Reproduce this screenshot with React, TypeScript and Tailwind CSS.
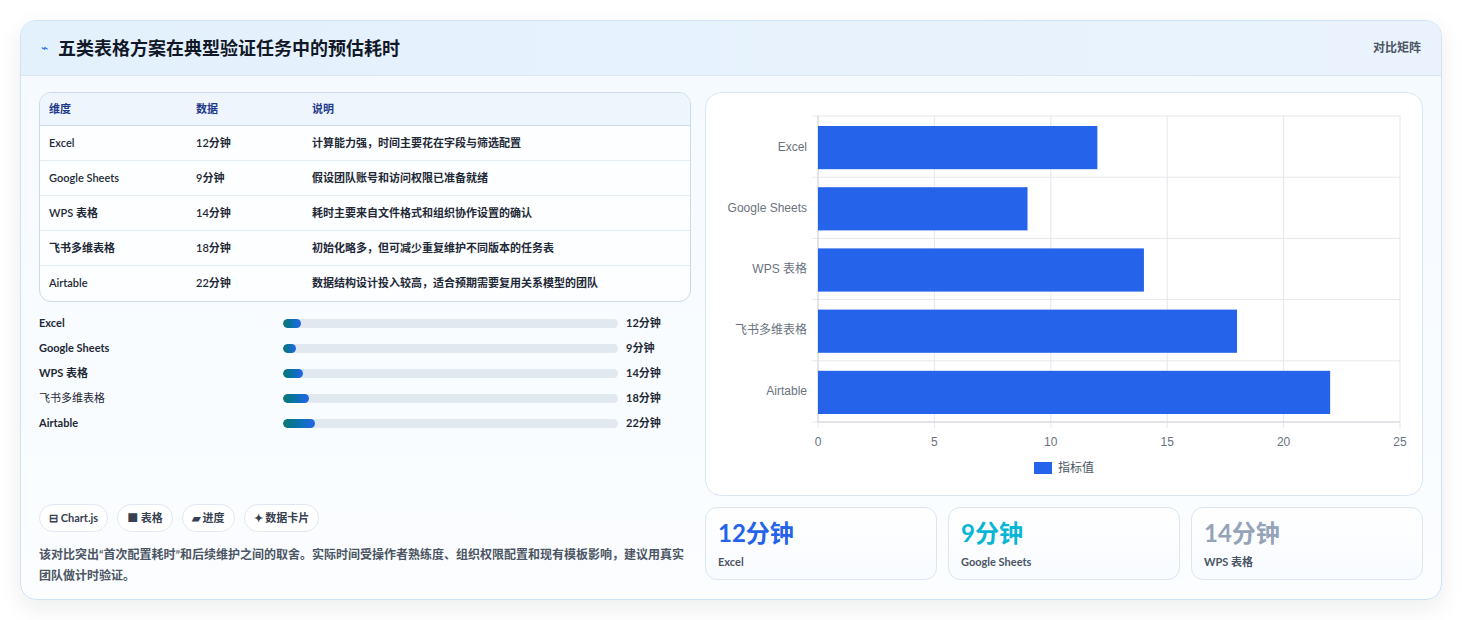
import React from "react";

const rows = [
  ["Excel", "12分钟", "计算能力强，时间主要花在字段与筛选配置", 12],
  ["Google Sheets", "9分钟", "假设团队账号和访问权限已准备就绪", 9],
  ["WPS 表格", "14分钟", "耗时主要来自文件格式和组织协作设置的确认", 14],
  ["飞书多维表格", "18分钟", "初始化略多，但可减少重复维护不同版本的任务表", 18],
  ["Airtable", "22分钟", "数据结构设计投入较高，适合预期需要复用关系模型的团队", 22],
] as const;

function Chart() {
  const x0 = 112, x1 = 694, y0 = 23, y1 = 329;
  const sx = (v: number) => x0 + ((x1 - x0) * v) / 25;
  const band = (y1 - y0) / 5;
  return (
    <svg width="716" height="402" className="block">
      {[0, 5, 10, 15, 20, 25].map((t) => (
        <g key={t}>
          <line x1={sx(t)} x2={sx(t)} y1={y0} y2={y1 + 6} stroke="#e5e7eb" />
          <text x={sx(t)} y={353} textAnchor="middle" fontSize="12" fill="#6b7280" fontFamily="Liberation Sans, sans-serif">{t}</text>
        </g>
      ))}
      {[0, 1, 2, 3, 4, 5].map((i) => (
        <line key={i} x1={x0 - 6} x2={x1} y1={y0 + band * i} y2={y0 + band * i} stroke="#e5e7eb" />
      ))}
      <line x1={x0} x2={x0} y1={y0} y2={y1} stroke="#d1d5db" />
      <line x1={x0} x2={x1} y1={y1} y2={y1} stroke="#d1d5db" />
      {rows.map((r, i) => (
        <g key={i}>
          <rect x={x0} y={y0 + band * i + 10} width={sx(r[3]) - x0} height={band - 18} fill="#2563eb" />
          <text x={x0 - 11} y={y0 + band * i + band / 2 + 4} textAnchor="end" fontSize="12" fill="#6b7280" fontFamily="Liberation Sans, Noto Sans CJK SC, sans-serif">{r[0]}</text>
        </g>
      ))}
      <rect x={328} y={369} width={18} height={12} fill="#2563eb" />
      <text x={352} y={379} fontSize="12" fill="#4b5563" fontFamily="Noto Sans CJK SC, sans-serif">指标值</text>
    </svg>
  );
}

export default function App() {
  return (
    <div className="w-[1462px] h-[620px] bg-white pt-5 px-5" style={{ fontFamily: "Lato, 'Noto Sans CJK SC', sans-serif" }}>
      <div className="w-[1422px] h-[580px] rounded-2xl border border-[#cfe3f5] bg-gradient-to-b from-[#f5faff] to-[#fbfdff] shadow-[0_8px_24px_rgba(15,23,42,0.08)] overflow-hidden flex flex-col">
        <div className="h-[55px] shrink-0 flex items-center justify-between px-5 bg-gradient-to-r from-[#e3f1fd] to-[#eaf3fd] border-b border-[#d6e6f5]">
          <div className="flex items-center gap-[10px]">
            <span className="text-[#2563eb] text-[12px]">⌁</span>
            <span className="text-[18px] font-bold text-[#111827]">五类表格方案在典型验证任务中的预估耗时</span>
          </div>
          <span className="text-[12px] text-[#4b5563] font-semibold">对比矩阵</span>
        </div>
        <div className="flex gap-[14px] px-[18px] pt-4 flex-1">
          <div className="w-[652px] flex flex-col">
            <div className="rounded-xl border border-[#cbd9e8] overflow-hidden bg-white/70 text-[11px] text-[#1f2937]">
              <div className="flex h-[33px] items-center bg-[#eef5fd] border-b border-[#cbd9e8] text-[#1e3a8a] font-semibold">
                <div className="w-[156px] pl-[9px]">维度</div>
                <div className="w-[116px]">数据</div>
                <div>说明</div>
              </div>
              {rows.map((r, i) => (
                <div key={i} className={`flex h-[35px] items-center font-semibold ${i < 4 ? "border-b border-[#e3ebf3]" : ""}`}>
                  <div className="w-[156px] pl-[9px]">{r[0]}</div>
                  <div className="w-[116px]">{r[1]}</div>
                  <div>{r[2]}</div>
                </div>
              ))}
            </div>
            <div className="flex flex-col gap-[9px] mt-[13px] pl-0">
              {rows.map((r, i) => (
                <div key={i} className="flex items-center h-[16px] text-[11px] font-bold text-[#1f2937]">
                  <div className={`w-[244px] ${i === 3 ? "font-normal" : ""}`}>{r[0]}</div>
                  <div className="w-[335px] h-[9px] rounded-full bg-[#e2e8f0] overflow-hidden">
                    <div className="h-full rounded-full bg-gradient-to-r from-[#0f766e] to-[#2563eb]" style={{ width: `${(r[3] / 22) * 9.6}%` }} />
                  </div>
                  <div className="ml-2">{r[1]}</div>
                </div>
              ))}
            </div>
            <div className="flex gap-[9px] mt-[73px]">
              {["⊟ Chart.js", "■ 表格", "▰ 进度", "✦ 数据卡片"].map((t) => (
                <span key={t} className="h-[28px] px-[9px] rounded-full border border-[#e2e8f0] bg-white text-[11px] font-bold text-[#374151] flex items-center">{t}</span>
              ))}
            </div>
            <p className="mt-[12px] text-[12px] leading-[21px] text-[#4b5563] font-semibold">
              该对比突出“首次配置耗时”和后续维护之间的取舍。实际时间受操作者熟练度、组织权限配置和现有模板影响，建议用真实团队做计时验证。
            </p>
          </div>
          <div className="w-[718px] flex flex-col gap-[11px]">
            <div className="h-[404px] rounded-2xl border border-[#dbe6f1] bg-white">
              <Chart />
            </div>
            <div className="flex gap-[11px]">
              {[["12分钟", "Excel", "text-[#2563eb]"], ["9分钟", "Google Sheets", "text-[#06b6d4]"], ["14分钟", "WPS 表格", "text-[#94a3b8]"]].map(([v, l, c]) => (
                <div key={l} className="flex-1 h-[73px] rounded-xl border border-[#dbe6f1] bg-gradient-to-b from-white to-[#f8fbff] px-3 pt-[10px]">
                  <div className={`text-[24px] font-bold leading-[30px] ${c}`}>{v}</div>
                  <div className="text-[11px] font-bold text-[#4b5563] mt-[6px]">{l}</div>
                </div>
              ))}
            </div>
          </div>
        </div>
      </div>
    </div>
  );
}
